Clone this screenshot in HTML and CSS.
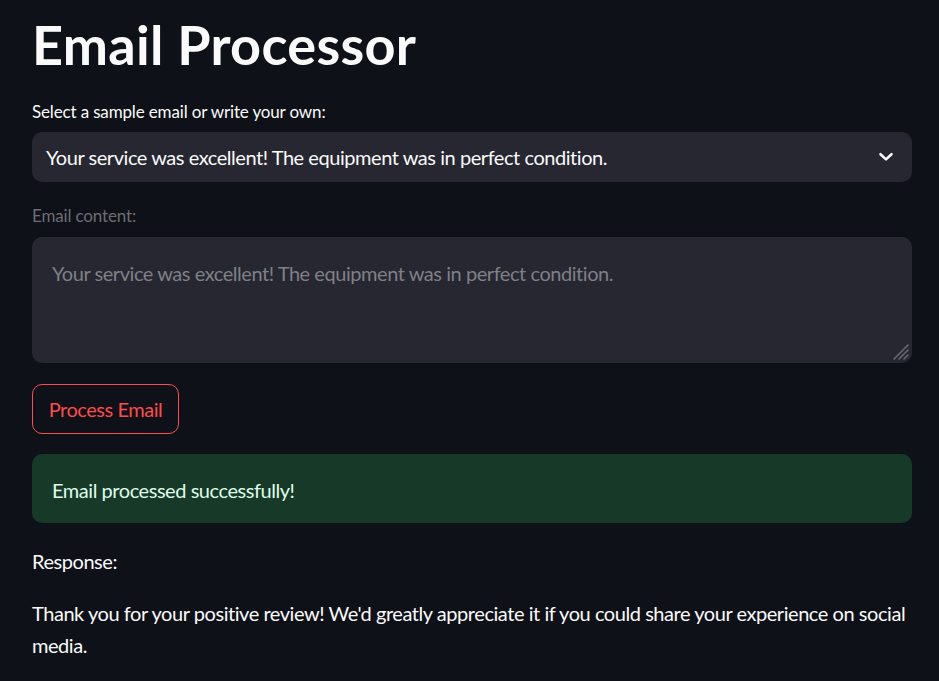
FILE: index.html
```html
<!DOCTYPE html>
<html lang="en">
<head>
<meta charset="utf-8">
<title>Email Processor</title>
<link rel="stylesheet" href="styles.css">
</head>
<body>
<main class="main">
  <h1 class="title">Email Processor</h1>

  <div class="field">
    <label class="label">Select a sample email or write your own:</label>
    <div class="select">
      <span class="select-value">Your service was excellent! The equipment was in perfect condition.</span>
      <svg class="chevron" width="16" height="16" viewBox="0 0 16 16"><path d="M2.5 5.2 L8 10.4 L13.5 5.2" fill="none" stroke="#fafafa" stroke-width="2.6" stroke-linecap="round" stroke-linejoin="round"/></svg>
    </div>
  </div>

  <div class="field">
    <label class="label label-disabled">Email content:</label>
    <div class="textarea">
      <span class="textarea-text">Your service was excellent! The equipment was in perfect condition.</span>
      <svg class="grip" width="18" height="18" viewBox="0 0 18 18"><g stroke="#6a6b72" stroke-width="1.6" stroke-linecap="round"><line x1="2" y1="16" x2="16" y2="2"/><line x1="7" y1="16" x2="16" y2="7"/><line x1="12" y1="16" x2="16" y2="12"/></g></svg>
    </div>
  </div>

  <button class="btn">Process Email</button>

  <div class="alert">Email processed successfully!</div>

  <p class="text response-label">Response:</p>
  <p class="text">Thank you for your positive review! We'd greatly appreciate it if you could share your experience on social media.</p>
</main>
</body>
</html>
```

FILE: styles.css
```css
* { box-sizing: border-box; }

html, body {
  margin: 0;
  padding: 0;
  background: #0e1117;
}

body {
  color: #fafafa;
  font-family: Lato, "Noto Sans", sans-serif;
  font-size: 20px;
  letter-spacing: -0.45px;
}

.main {
  width: 880px;
  margin-left: 32px;
  display: flex;
  flex-direction: column;
  align-items: stretch;
}

.title {
  margin: 12px 0 0 0;
  font-size: 54px;
  line-height: 66px;
  font-weight: 700;
  letter-spacing: 0.3px;
  color: #fafafa;
}

.field {
  display: flex;
  flex-direction: column;
  gap: 8px;
}

.field + .field { margin-top: 22px; }

.title + .field { margin-top: 22px; }

.label {
  font-size: 17px;
  line-height: 24px;
  letter-spacing: -0.15px;
  color: #fafafa;
}

.label-disabled { color: #6c6d72; }

.select {
  height: 50px;
  background: #262730;
  border-radius: 10px;
  display: flex;
  align-items: center;
  justify-content: space-between;
  padding: 0 18px 0 14px;
}

.select-value {
  font-size: 20px;
  color: #fafafa;
}

.chevron { display: block; }

.textarea {
  position: relative;
  height: 126px;
  margin-top: 1px;
  background: #262730;
  border-radius: 10px;
  padding: 20px 20px;
}

.textarea-text {
  font-size: 20px;
  line-height: 32px;
  color: #7f8086;
}

.grip {
  position: absolute;
  right: 2px;
  bottom: 2px;
}

.btn {
  align-self: flex-start;
  margin-top: 21px;
  height: 50px;
  width: 147px;
  padding: 0;
  background: #0e1117;
  border: 1px solid #ff4b4b;
  border-radius: 10px;
  color: #ff4b4b;
  font-family: inherit;
  font-size: 20px;
  letter-spacing: -0.45px;
}

.alert {
  margin-top: 20px;
  height: 69px;
  background: #173928;
  border-radius: 10px;
  color: #dffde9;
  font-size: 20px;
  line-height: 32px;
  padding: 20px 20px 17px 20px;
}

.text {
  margin: 0;
  font-size: 20px;
  line-height: 32px;
}

.response-label { margin-top: 22px; margin-bottom: 20px; }
```
